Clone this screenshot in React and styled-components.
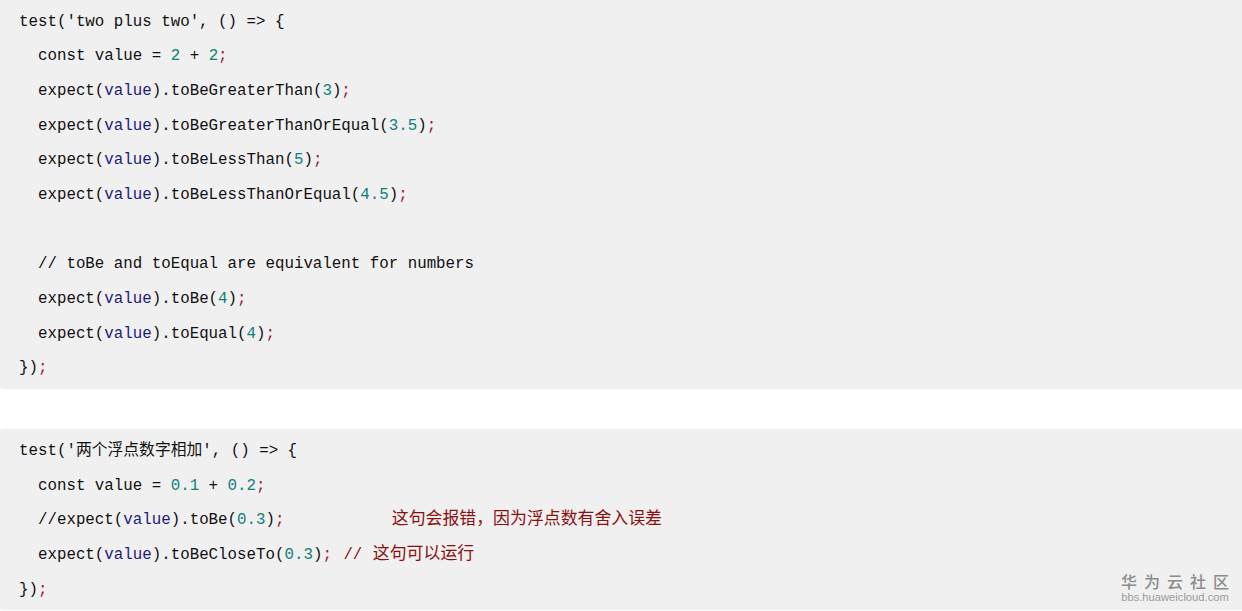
import React from "react";
import styled, { createGlobalStyle } from "styled-components";

const Global = createGlobalStyle`
  html, body { margin: 0; padding: 0; background: #ffffff; overflow: hidden; }
  #root { width: 1242px; height: 611px; overflow: hidden; position: relative; }
`;

const Page = styled.div`
  display: flex;
  flex-direction: column;
  gap: 40px;
  margin-top: -1px;
  margin-right: -10px;
`;

const CodeBlock = styled.pre`
  margin: 0;
  padding: 5.5px 0 2.5px 19px;
  background: #f0f0f0;
  border-radius: 4px;
  box-shadow: 0 0 1px rgba(0, 0, 0, 0.12);
  font-family: "Liberation Mono", "Noto Sans CJK SC", monospace;
  font-size: 15.8px;
  line-height: 34.7px;
  color: #111111;
`;

const Line = styled.div`
  white-space: pre;
  height: 34.7px;
`;

const Val = styled.span`
  color: #1c1c78;
`;

const Num = styled.span`
  color: #0f7f7c;
`;

const Semi = styled.span`
  color: #9c1b3c;
`;

const Cjk = styled.span`
  font-family: "Noto Sans CJK SC", sans-serif;
  font-size: ${(p) => (p.$big ? "16.9px" : "15.8px")};
  line-height: 1;
  color: ${(p) => (p.$red ? "#8a0f0f" : "inherit")};
  margin-left: ${(p) => p.$shift || 0}px;
`;

const RedComment = styled.span`
  color: #8a0f0f;
  margin-left: 2px;
`;

const Watermark = styled.div`
  position: absolute;
  right: 13px;
  bottom: 8px;
  display: flex;
  flex-direction: column;
  align-items: center;
  color: #8c8c8c;
  font-family: "Noto Sans CJK SC", sans-serif;
  pointer-events: none;
`;

const WmTitle = styled.div`
  font-size: 16px;
  letter-spacing: 7px;
  margin-right: -7px;
  line-height: 20px;
  font-weight: 500;
`;

const WmUrl = styled.div`
  font-family: "Liberation Sans", Arial, sans-serif;
  font-size: 11.2px;
  line-height: 12px;
  color: #9a9a9a;
`;

const Expect = ({ children }) => (
  <>
    expect(<Val>value</Val>).{children}
  </>
);

export default function App() {
  return (
    <>
      <Global />
      <Page>
        <CodeBlock>
          <Line>test('two plus two', () =&gt; {"{"}</Line>
          <Line>
            {"  const value = "}
            <Num>2</Num> + <Num>2</Num>
            <Semi>;</Semi>
          </Line>
          <Line>
            {"  "}
            <Expect>
              toBeGreaterThan(<Num>3</Num>)<Semi>;</Semi>
            </Expect>
          </Line>
          <Line>
            {"  "}
            <Expect>
              toBeGreaterThanOrEqual(<Num>3.5</Num>)<Semi>;</Semi>
            </Expect>
          </Line>
          <Line>
            {"  "}
            <Expect>
              toBeLessThan(<Num>5</Num>)<Semi>;</Semi>
            </Expect>
          </Line>
          <Line>
            {"  "}
            <Expect>
              toBeLessThanOrEqual(<Num>4.5</Num>)<Semi>;</Semi>
            </Expect>
          </Line>
          <Line> </Line>
          <Line>{"  // toBe and toEqual are equivalent for numbers"}</Line>
          <Line>
            {"  "}
            <Expect>
              toBe(<Num>4</Num>)<Semi>;</Semi>
            </Expect>
          </Line>
          <Line>
            {"  "}
            <Expect>
              toEqual(<Num>4</Num>)<Semi>;</Semi>
            </Expect>
          </Line>
          <Line>
            {"})"}
            <Semi>;</Semi>
          </Line>
        </CodeBlock>
        <CodeBlock>
          <Line>
            test('<Cjk>两个浮点数字相加</Cjk>', () =&gt; {"{"}
          </Line>
          <Line>
            {"  const value = "}
            <Num>0.1</Num> + <Num>0.2</Num>
            <Semi>;</Semi>
          </Line>
          <Line>
            {"  //"}
            <Expect>
              toBe(<Num>0.3</Num>)<Semi>;</Semi>
            </Expect>
            {"           "}
            <Cjk $red $big $shift={3}>这句会报错，因为浮点数有舍入误差</Cjk>
          </Line>
          <Line>
            {"  "}
            <Expect>
              toBeCloseTo(<Num>0.3</Num>)<Semi>;</Semi>
            </Expect>{" "}
            <RedComment>
              // <Cjk $red $big $shift={1}>这句可以运行</Cjk>
            </RedComment>
          </Line>
          <Line>
            {"})"}
            <Semi>;</Semi>
          </Line>
        </CodeBlock>
      </Page>
      <Watermark>
        <WmTitle>华为云社区</WmTitle>
        <WmUrl>bbs.huaweicloud.com</WmUrl>
      </Watermark>
    </>
  );
}
